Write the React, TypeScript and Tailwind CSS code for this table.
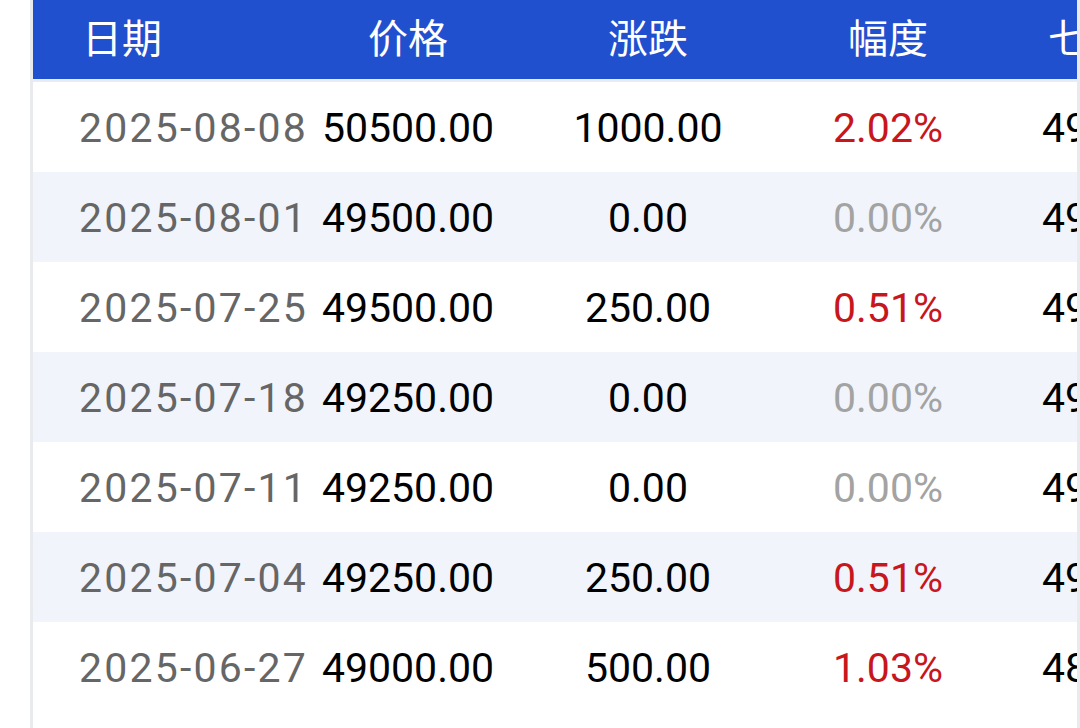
import React from "react";

type Row = {
  date: string;
  price: string;
  change: string;
  pct: string;
  prev: string;
};

const rows: Row[] = [
  { date: "2025-08-08", price: "50500.00", change: "1000.00", pct: "2.02%", prev: "49500.00" },
  { date: "2025-08-01", price: "49500.00", change: "0.00", pct: "0.00%", prev: "49500.00" },
  { date: "2025-07-25", price: "49500.00", change: "250.00", pct: "0.51%", prev: "49250.00" },
  { date: "2025-07-18", price: "49250.00", change: "0.00", pct: "0.00%", prev: "49250.00" },
  { date: "2025-07-11", price: "49250.00", change: "0.00", pct: "0.00%", prev: "49250.00" },
  { date: "2025-07-04", price: "49250.00", change: "250.00", pct: "0.51%", prev: "49000.00" },
  { date: "2025-06-27", price: "49000.00", change: "500.00", pct: "1.03%", prev: "48500.00" },
];

const font = "font-['Roboto','Noto_Sans_CJK_SC',sans-serif]";

const PriceTable: React.FC = () => {
  return (
    <div className={`flex h-[728px] w-[1080px] overflow-hidden bg-white ${font}`}>
      <div className="w-[30px] shrink-0 bg-white" />
      <div className="w-[3px] shrink-0 bg-[#e9eaed]" />
      <div className="flex-1 overflow-hidden">
        <div className="flex h-[79px] items-center bg-[#2150cf] text-[40px] text-white whitespace-nowrap">
          <div className="w-[255px] shrink-0 pl-[49px]">日期</div>
          <div className="w-[240px] shrink-0 text-center">价格</div>
          <div className="w-[240px] shrink-0 text-center">涨跌</div>
          <div className="w-[240px] shrink-0 text-center">幅度</div>
          <div className="w-[240px] shrink-0 text-center">七日前价</div>
        </div>
        <div className="h-[3px] bg-[#e7ecf5]" />
        {rows.map((r, i) => {
          const zero = r.change === "0.00";
          return (
            <div
              key={r.date}
              className={`flex h-[90px] items-center pt-[3px] text-[41px] whitespace-nowrap ${
                i % 2 === 1 ? "bg-[#f1f5fb]" : "bg-white"
              }`}
            >
              <div className="w-[255px] shrink-0 pl-[46px] text-[#666666] tracking-[2.2px]">{r.date}</div>
              <div className="w-[240px] shrink-0 text-center text-black">{r.price}</div>
              <div className="w-[240px] shrink-0 text-center text-black">{r.change}</div>
              <div className={`w-[240px] shrink-0 text-center ${zero ? "text-[#a3a3a3]" : "text-[#c8161d]"}`}>
                {r.pct}
              </div>
              <div className="w-[240px] shrink-0 text-center text-black">{r.prev}</div>
            </div>
          );
        })}
      </div>
      <div className="w-[3px] shrink-0 bg-[#e9eaed]" />
    </div>
  );
};

export default function App() {
  return <PriceTable />;
}
